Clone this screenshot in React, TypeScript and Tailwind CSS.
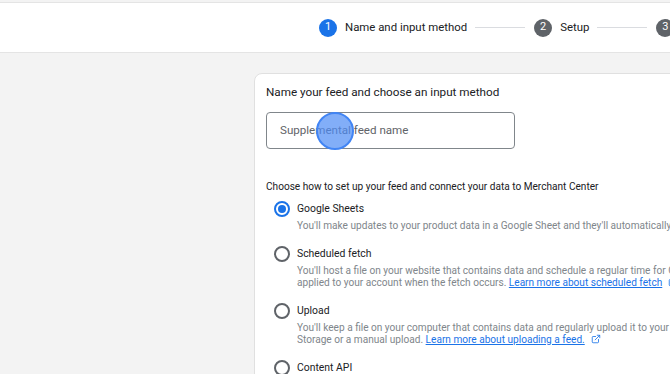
import { ExternalLink } from "lucide-react";

// Merchant Center "add supplemental feed" wizard, step 1.

const steps = [
  { n: 1, label: "Name and input method", active: true },
  { n: 2, label: "Setup", active: false },
  { n: 3, label: "Upload schedule", active: false },
];

const methods = [
  {
    label: "Google Sheets",
    checked: true,
    lines: [
      "You'll make updates to your product data in a Google Sheet and they'll automatically be applied to your account.",
    ],
  },
  {
    label: "Scheduled fetch",
    checked: false,
    lines: [
      "You'll host a file on your website that contains data and schedule a regular time for Google to fetch updates. Updates are only",
      "applied to your account when the fetch occurs.",
    ],
    link: "Learn more about scheduled fetch",
  },
  {
    label: "Upload",
    checked: false,
    lines: [
      "You'll keep a file on your computer that contains data and regularly upload it to your account through SFTP, FTP, Google Cloud",
      "Storage or a manual upload.",
    ],
    link: "Learn more about uploading a feed.",
  },
  { label: "Content API", checked: false, lines: [] },
];

function Radio({ checked }: { checked: boolean }) {
  return (
    <span
      className={`grid h-[16px] w-[16px] shrink-0 place-items-center rounded-full border-2 ${
        checked ? "border-[#1a73e8]" : "border-[#5f6368]"
      }`}
    >
      {checked && <span className="h-[8px] w-[8px] rounded-full bg-[#1a73e8]" />}
    </span>
  );
}

export default function App() {
  return (
    <div
      className="flex h-[374px] w-[670px] flex-col overflow-hidden bg-[#f3f3f3] text-[#202124]"
      style={{ fontFamily: "Roboto, 'Liberation Sans', sans-serif" }}
    >
      <header className="mt-[2px] flex h-[51px] shrink-0 items-center overflow-hidden border-y border-[#e4e4e4] bg-white pl-[319px]">
        <div className="flex items-center whitespace-nowrap">
          {steps.map((s, i) => (
            <div key={s.n} className="flex items-center">
              {i > 0 && <span className="ml-[8px] mr-[9px] h-px w-[50px] bg-[#dadce0]" />}
              <span
                className={`grid h-[18px] w-[18px] place-items-center rounded-full text-[11px] text-white ${
                  s.active ? "bg-[#1a73e8]" : "bg-[#5f6368]"
                }`}
              >
                {s.n}
              </span>
              <span className="ml-[8px] text-[11.4px] text-[#202124]">{s.label}</span>
            </div>
          ))}
        </div>
      </header>

      <div className="flex-1 pl-[254px] pt-[20px]">
        <section className="h-[400px] w-[500px] rounded-tl-[8px] border border-[#e0e0e0] bg-white pl-[11px] pt-[10px]">
          <h1 className="text-[11.7px] leading-[16px]">Name your feed and choose an input method</h1>

          <div className="relative mt-[12px] flex h-[37px] w-[249px] items-center rounded-[4px] border border-[#80868b] pl-[13px]">
            <span className="text-[11.6px] text-[#5f6368]">Supplemental feed name</span>
            <span className="absolute left-[49px] top-[-1px] h-[38px] w-[38px] rounded-full border-2 border-[#4285f4] bg-[#4d8cf5]/70" />
          </div>

          <p className="mt-[31px] whitespace-nowrap text-[10.1px] leading-[13px]">
            Choose how to set up your feed and connect your data to Merchant Center
          </p>

          <div className="mt-[8px] flex flex-col gap-[14px] pl-[8px]">
            {methods.map((m) => (
              <div key={m.label}>
                <label className="flex h-[16px] items-center gap-[7px]">
                  <Radio checked={m.checked} />
                  <span className="text-[10.4px]">{m.label}</span>
                </label>
                {m.lines.length > 0 && (
                  <div className="mt-[3px] overflow-hidden whitespace-nowrap pl-[23px] text-[10.1px] leading-[12px] text-[#80868b]">
                    {m.lines.map((l, i) => (
                      <p key={i}>
                        {l}
                        {m.link && i === m.lines.length - 1 && (
                          <>
                            {" "}
                            <a className="text-[#1a73e8] underline">{m.link}</a>
                            <ExternalLink className="ml-[6px] inline h-[10px] w-[10px] align-[-1px] text-[#1a73e8]" />
                          </>
                        )}
                      </p>
                    ))}
                  </div>
                )}
              </div>
            ))}
          </div>
        </section>
      </div>
    </div>
  );
}
